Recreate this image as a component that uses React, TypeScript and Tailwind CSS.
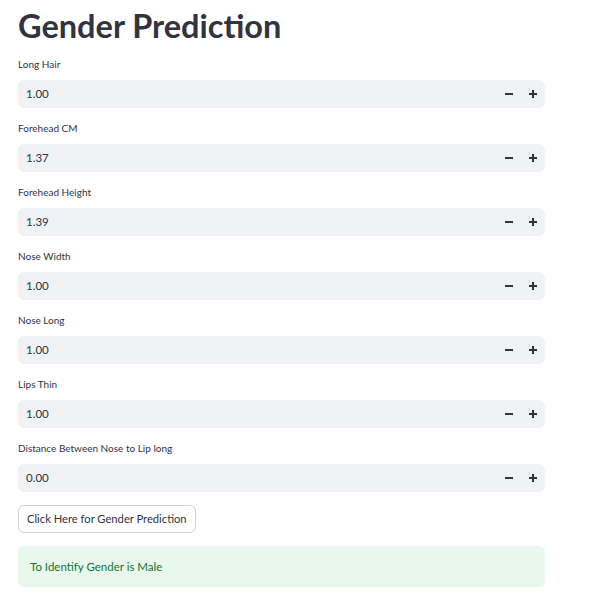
import React from 'react';

const fields = [
  { label: 'Long Hair', value: '1.00' },
  { label: 'Forehead CM', value: '1.37' },
  { label: 'Forehead Height', value: '1.39' },
  { label: 'Nose Width', value: '1.00' },
  { label: 'Nose Long', value: '1.00' },
  { label: 'Lips Thin', value: '1.00' },
  { label: 'Distance Between Nose to Lip long', value: '0.00' },
];

function NumberInput({ label, value }: { label: string; value: string }) {
  return (
    <div className="flex flex-col">
      <label className="h-[15px] text-[10px] leading-[15px] text-[#31333f]">{label}</label>
      <div className="mt-[8px] flex h-[28px] items-center rounded-md bg-[#f0f2f6]">
        <span className="flex-1 pl-[8px] text-[11.5px] text-[#31333f]">{value}</span>
        <div className="flex items-center">
          <button className="flex h-[28px] w-[24px] items-center justify-center">
            <svg width="8" height="8" viewBox="0 0 8 8">
              <rect x="0" y="3" width="8" height="2" fill="#31333f" />
            </svg>
          </button>
          <button className="flex h-[28px] w-[24px] items-center justify-center">
            <svg width="8" height="8" viewBox="0 0 8 8">
              <rect x="0" y="3" width="8" height="2" fill="#31333f" />
              <rect x="3" y="0" width="2" height="8" fill="#31333f" />
            </svg>
          </button>
        </div>
      </div>
    </div>
  );
}

export default function App() {
  return (
    <div className="min-h-screen bg-white font-['Lato',sans-serif] text-[#31333f]">
      <div className="box-content w-[527px] pl-[18px] pt-[4px]">
        <h1 className="text-[32.5px] font-bold leading-[44px] text-[#31333f]">Gender Prediction</h1>
        <div className="mt-[9px] flex flex-col gap-[13px]">
          {fields.map((f) => (
            <NumberInput key={f.label} label={f.label} value={f.value} />
          ))}
        </div>
        <button className="mt-[13px] h-[28px] rounded-md border border-[#d0d1d5] bg-white px-[8px] text-[11.2px] text-[#31333f]">
          Click Here for Gender Prediction
        </button>
        <div className="mt-[13px] flex h-[41px] items-center rounded-md bg-[#e8f8ed] px-[12px] text-[11.5px] text-[#177233]">
          To Identify Gender is Male
        </div>
      </div>
    </div>
  );
}
